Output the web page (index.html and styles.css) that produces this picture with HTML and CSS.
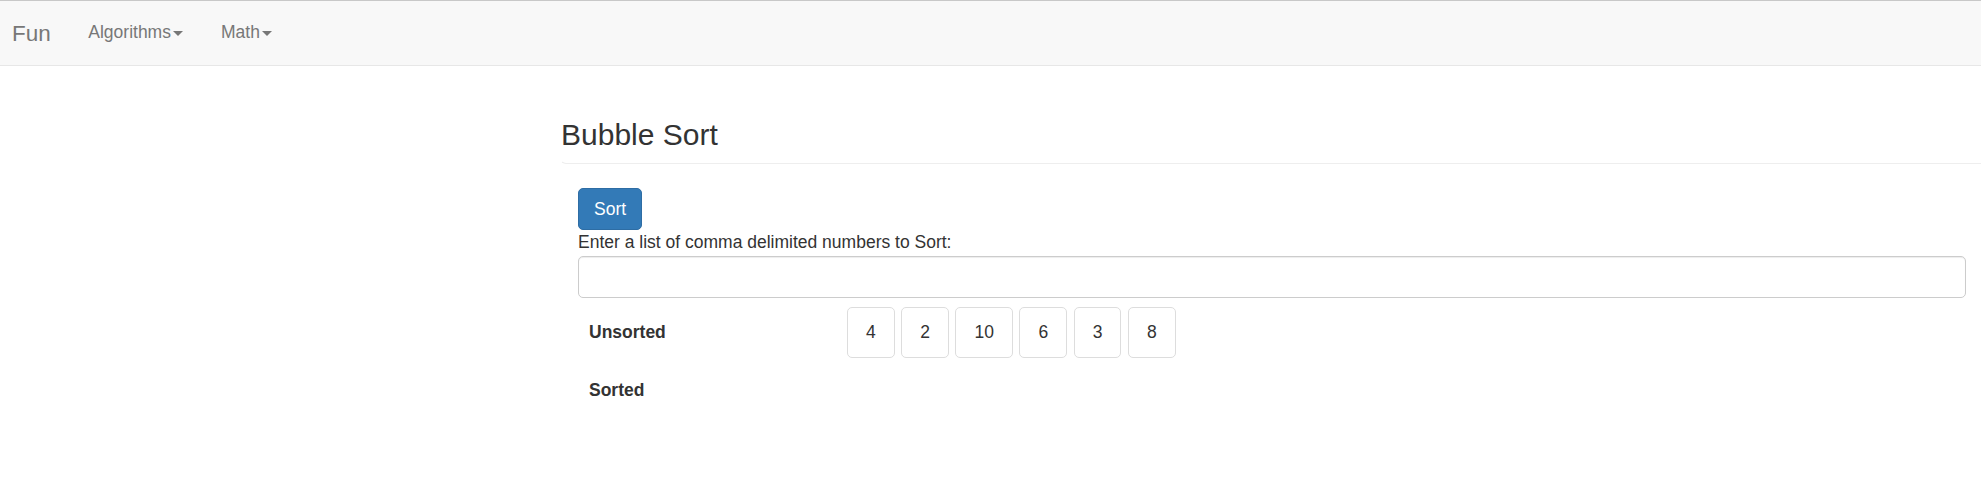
FILE: index.html
```html
<!DOCTYPE html>
<html lang="en">
<head>
<meta charset="utf-8">
<title>Bubble Sort</title>
<link rel="stylesheet" href="styles.css">
</head>
<body>
<nav class="navbar">
  <a class="brand" href="#">Fun</a>
  <a class="nav-link" href="#">Algorithms<span class="caret"></span></a>
  <a class="nav-link" href="#">Math<span class="caret"></span></a>
</nav>
<main class="main">
  <div class="page-header">
    <h1 class="title">Bubble Sort</h1>
  </div>
  <div class="panel">
    <button class="btn" type="button">Sort</button>
    <label class="input-label" for="nums">Enter a list of comma delimited numbers to Sort:</label>
    <input class="form-control" id="nums" type="text">
    <div class="row row-first">
      <div class="row-label">Unsorted</div>
      <div class="cells">
        <span class="cell">4</span>
        <span class="cell">2</span>
        <span class="cell">10</span>
        <span class="cell">6</span>
        <span class="cell">3</span>
        <span class="cell">8</span>
      </div>
    </div>
    <div class="row">
      <div class="row-label">Sorted</div>
      <div class="cells"></div>
    </div>
  </div>
</main>
</body>
</html>
```

FILE: styles.css
```css
* { box-sizing: border-box; }

html, body {
  margin: 0;
  padding: 0;
  background: #fff;
}

body {
  font-family: "Liberation Sans", Arial, Helvetica, sans-serif;
  font-size: 17.5px;
  line-height: 25px;
  color: #333;
}

.navbar {
  display: flex;
  align-items: stretch;
  height: 66px;
  background: #f8f8f8;
  border-top: 1px solid #c8c8c8;
  border-bottom: 1px solid #e7e7e7;
}

.brand {
  display: flex;
  align-items: center;
  padding: 1px 18.75px 0 12px;
  font-size: 22.5px;
  color: #777;
  text-decoration: none;
}

.nav-link {
  display: flex;
  align-items: center;
  padding: 0 18.75px 2px;
  font-size: 17.5px;
  color: #777;
  text-decoration: none;
}

.caret {
  display: inline-block;
  width: 0;
  height: 0;
  margin-left: 2.5px;
  margin-top: 2px;
  border-top: 5px solid #777;
  border-left: 5px solid transparent;
  border-right: 5px solid transparent;
}

.main {
  margin-left: 560px;
  padding-right: 0;
}

.page-header {
  margin-top: 52px;
  padding: 0 0 12px 0;
  border-bottom: 1px solid #eee;
  border-left: 1px solid transparent;
  border-bottom-left-radius: 6px;
}

.title {
  margin: 0;
  font-size: 30px;
  line-height: 33px;
  font-weight: 500;
  color: #333;
}

.panel {
  padding: 24px 15px 0 18px;
  display: flex;
  flex-direction: column;
  align-items: flex-start;
}

.btn {
  font-family: inherit;
  font-size: 17.5px;
  line-height: 25px;
  padding: 7.5px 15px;
  color: #fff;
  background: #337ab7;
  border: 1px solid #2e6da4;
  border-radius: 5px;
  cursor: pointer;
}

.input-label {
  display: block;
  font-weight: normal;
  margin-bottom: 1px;
}

.form-control {
  display: block;
  width: 100%;
  height: 42px;
  padding: 7.5px 15px;
  font-family: inherit;
  font-size: 17.5px;
  color: #555;
  background: #fff;
  border: 1px solid #ccc;
  border-radius: 5px;
  box-shadow: inset 0 1px 1px rgba(0, 0, 0, 0.075);
}

.row {
  display: flex;
  align-items: center;
  min-height: 51px;
  width: 100%;
  margin-top: 7px;
}

.row-first {
  margin-top: 9px;
}

.row-label {
  width: 269px;
  flex: none;
  padding-left: 11px;
  font-weight: bold;
}

.cells {
  display: flex;
  gap: 6.5px;
}

.cell {
  display: block;
  padding: 12px 18px;
  line-height: 25px;
  border: 1px solid #ddd;
  border-radius: 5px;
  background: #fff;
  color: #333;
}
```
